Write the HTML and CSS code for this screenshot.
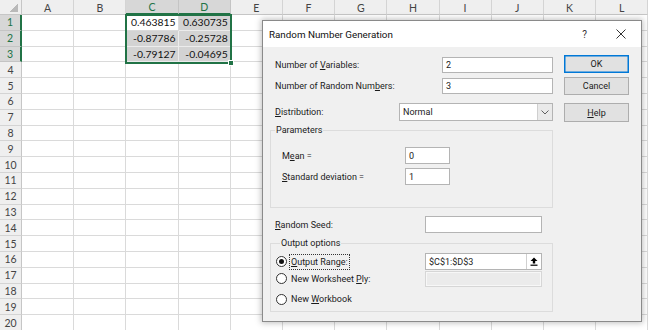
FILE: index.html
```html
<!DOCTYPE html>
<html>
<head>
<meta charset="utf-8">
<link rel="stylesheet" href="styles.css">
</head>
<body>
<div class="sheet">
  <div class="corner"></div><div class="ch">A</div><div class="ch">B</div><div class="ch sel">C</div><div class="ch sel">D</div><div class="ch">E</div><div class="ch">F</div><div class="ch">G</div><div class="ch">H</div><div class="ch">I</div><div class="ch">J</div><div class="ch">K</div><div class="ch">L</div>
  <div class="rh sel">1</div><div class="c"></div><div class="c"></div><div class="c act">0.463815</div><div class="c s">0.630735</div><div class="c"></div><div class="c"></div><div class="c"></div><div class="c"></div><div class="c"></div><div class="c"></div><div class="c"></div><div class="c"></div>
  <div class="rh sel">2</div><div class="c"></div><div class="c"></div><div class="c s">-0.87786</div><div class="c s">-0.25728</div><div class="c"></div><div class="c"></div><div class="c"></div><div class="c"></div><div class="c"></div><div class="c"></div><div class="c"></div><div class="c"></div>
  <div class="rh sel">3</div><div class="c"></div><div class="c"></div><div class="c s">-0.79127</div><div class="c s">-0.04695</div><div class="c"></div><div class="c"></div><div class="c"></div><div class="c"></div><div class="c"></div><div class="c"></div><div class="c"></div><div class="c"></div>
  <div class="rh">4</div><div class="c"></div><div class="c"></div><div class="c"></div><div class="c"></div><div class="c"></div><div class="c"></div><div class="c"></div><div class="c"></div><div class="c"></div><div class="c"></div><div class="c"></div><div class="c"></div>
  <div class="rh">5</div><div class="c"></div><div class="c"></div><div class="c"></div><div class="c"></div><div class="c"></div><div class="c"></div><div class="c"></div><div class="c"></div><div class="c"></div><div class="c"></div><div class="c"></div><div class="c"></div>
  <div class="rh">6</div><div class="c"></div><div class="c"></div><div class="c"></div><div class="c"></div><div class="c"></div><div class="c"></div><div class="c"></div><div class="c"></div><div class="c"></div><div class="c"></div><div class="c"></div><div class="c"></div>
  <div class="rh">7</div><div class="c"></div><div class="c"></div><div class="c"></div><div class="c"></div><div class="c"></div><div class="c"></div><div class="c"></div><div class="c"></div><div class="c"></div><div class="c"></div><div class="c"></div><div class="c"></div>
  <div class="rh">8</div><div class="c"></div><div class="c"></div><div class="c"></div><div class="c"></div><div class="c"></div><div class="c"></div><div class="c"></div><div class="c"></div><div class="c"></div><div class="c"></div><div class="c"></div><div class="c"></div>
  <div class="rh">9</div><div class="c"></div><div class="c"></div><div class="c"></div><div class="c"></div><div class="c"></div><div class="c"></div><div class="c"></div><div class="c"></div><div class="c"></div><div class="c"></div><div class="c"></div><div class="c"></div>
  <div class="rh">10</div><div class="c"></div><div class="c"></div><div class="c"></div><div class="c"></div><div class="c"></div><div class="c"></div><div class="c"></div><div class="c"></div><div class="c"></div><div class="c"></div><div class="c"></div><div class="c"></div>
  <div class="rh">11</div><div class="c"></div><div class="c"></div><div class="c"></div><div class="c"></div><div class="c"></div><div class="c"></div><div class="c"></div><div class="c"></div><div class="c"></div><div class="c"></div><div class="c"></div><div class="c"></div>
  <div class="rh">12</div><div class="c"></div><div class="c"></div><div class="c"></div><div class="c"></div><div class="c"></div><div class="c"></div><div class="c"></div><div class="c"></div><div class="c"></div><div class="c"></div><div class="c"></div><div class="c"></div>
  <div class="rh">13</div><div class="c"></div><div class="c"></div><div class="c"></div><div class="c"></div><div class="c"></div><div class="c"></div><div class="c"></div><div class="c"></div><div class="c"></div><div class="c"></div><div class="c"></div><div class="c"></div>
  <div class="rh">14</div><div class="c"></div><div class="c"></div><div class="c"></div><div class="c"></div><div class="c"></div><div class="c"></div><div class="c"></div><div class="c"></div><div class="c"></div><div class="c"></div><div class="c"></div><div class="c"></div>
  <div class="rh">15</div><div class="c"></div><div class="c"></div><div class="c"></div><div class="c"></div><div class="c"></div><div class="c"></div><div class="c"></div><div class="c"></div><div class="c"></div><div class="c"></div><div class="c"></div><div class="c"></div>
  <div class="rh">16</div><div class="c"></div><div class="c"></div><div class="c"></div><div class="c"></div><div class="c"></div><div class="c"></div><div class="c"></div><div class="c"></div><div class="c"></div><div class="c"></div><div class="c"></div><div class="c"></div>
  <div class="rh">17</div><div class="c"></div><div class="c"></div><div class="c"></div><div class="c"></div><div class="c"></div><div class="c"></div><div class="c"></div><div class="c"></div><div class="c"></div><div class="c"></div><div class="c"></div><div class="c"></div>
  <div class="rh">18</div><div class="c"></div><div class="c"></div><div class="c"></div><div class="c"></div><div class="c"></div><div class="c"></div><div class="c"></div><div class="c"></div><div class="c"></div><div class="c"></div><div class="c"></div><div class="c"></div>
  <div class="rh">19</div><div class="c"></div><div class="c"></div><div class="c"></div><div class="c"></div><div class="c"></div><div class="c"></div><div class="c"></div><div class="c"></div><div class="c"></div><div class="c"></div><div class="c"></div><div class="c"></div>
  <div class="rh">20</div><div class="c"></div><div class="c"></div><div class="c"></div><div class="c"></div><div class="c"></div><div class="c"></div><div class="c"></div><div class="c"></div><div class="c"></div><div class="c"></div><div class="c"></div><div class="c"></div>
</div>
<div class="selbox"><span class="handle"></span></div>

<div class="dlg">
  <div class="titlebar">
    <span class="title">Random Number Generation</span>
    <span class="qmark">?</span>
    <svg class="xbtn" width="10" height="10" viewBox="0 0 10 10"><path d="M0.5 0.5 L9.5 9.5 M9.5 0.5 L0.5 9.5" stroke="#333" stroke-width="1" fill="none"/></svg>
  </div>
  <div class="body">
    <div class="main">
      <div class="row r1"><span class="lbl">Number of <u>V</u>ariables:</span><span class="inp wide">2</span></div>
      <div class="row r2"><span class="lbl">Number of Random Num<u>b</u>ers:</span><span class="inp wide">3</span></div>
      <div class="row r3"><span class="lbl"><u>D</u>istribution:</span>
        <span class="select"><span class="val">Normal</span><span class="arrow"><svg width="8" height="5" viewBox="0 0 8 5"><path d="M0.5 0.5 L4 4 L7.5 0.5" stroke="#606060" stroke-width="1" fill="none"/></svg></span></span>
      </div>
      <fieldset class="grp params">
        <legend>Parameters</legend>
        <div class="prow first"><span class="lbl">M<u>e</u>an =</span><span class="inp small">0</span></div>
        <div class="prow"><span class="lbl"><u>S</u>tandard deviation =</span><span class="inp small">1</span></div>
      </fieldset>
      <div class="seed"><span class="lbl"><u>R</u>andom Seed:</span><span class="inp mid"></span></div>
      <fieldset class="grp output">
        <legend>Output options</legend>
        <div class="orow first"><span class="radio on"></span><span class="rlbl focus"><u>O</u>utput Range:</span>
          <span class="inp mid range"><span class="rv">$C$1:$D$3</span><span class="pick"><svg width="8" height="9" viewBox="0 0 8 9"><path d="M4 0.5 L7.5 4 L5.2 4 L5.2 6.5 L2.8 6.5 L2.8 4 L0.5 4 Z" fill="#000"/><rect x="0.5" y="7.6" width="7" height="1.2" fill="#000"/></svg></span></span>
        </div>
        <div class="orow"><span class="radio"></span><span class="rlbl">New Worksheet <u>P</u>ly:</span><span class="inp mid dis"></span></div>
        <div class="orow last"><span class="radio"></span><span class="rlbl">New <u>W</u>orkbook</span></div>
      </fieldset>
    </div>
    <div class="btns">
      <span class="btn def">OK</span>
      <span class="btn">Cancel</span>
      <span class="btn hb"><u>H</u>elp</span>
    </div>
  </div>
</div>
</body>
</html>
```

FILE: styles.css
```css
* { box-sizing: border-box; }
html, body { margin: 0; padding: 0; }
body {
  width: 650px;
  height: 330px;
  overflow: hidden;
  position: relative;
  background: #fff;
  font-family: Lato, "Noto Sans", sans-serif;
}

/* ---------- worksheet ---------- */
.sheet {
  display: grid;
  grid-template-columns: 22px repeat(12, 52.2px);
  grid-template-rows: 15px repeat(20, 15.8px);
}
.sheet > div {
  border-right: 1px solid #dadada;
  border-bottom: 1px solid #dadada;
}
.corner {
  background: #efefef linear-gradient(to bottom right, transparent 50%, #b9b9b9 50%) no-repeat right 3px bottom 2px / 9px 9px;
  border-bottom-color: #c6c6c6 !important;
  border-right-color: #c6c6c6 !important;
}
.ch {
  background: #efefef;
  border-right-color: #d4d4d4 !important;
  border-bottom-color: #c6c6c6 !important;
  color: #444;
  font-size: 10.5px;
  display: flex;
  align-items: center;
  justify-content: center;
  padding-top: 1px;
}
.ch.sel {
  background: #d7d7d7;
  color: #217346;
  border-bottom: 2px solid #217346 !important;
  border-right-color: #c4c4c4 !important;
}
.rh {
  background: #efefef;
  border-right-color: #c6c6c6 !important;
  border-bottom-color: #d4d4d4 !important;
  color: #444;
  font-size: 10.5px;
  display: flex;
  align-items: center;
  justify-content: center;
}
.rh.sel {
  background: #d7d7d7;
  color: #217346;
  border-right: 2px solid #217346 !important;
  border-bottom-color: #c4c4c4 !important;
}
.c {
  font-size: 10.4px;
  color: #111;
  text-align: right;
  padding-right: 2px;
  line-height: 15px;
}
.c.s {
  background: #d3d3d3;
  border-color: #ececec;
}
.c.act { background: #fff; }

.selbox {
  position: absolute;
  left: 125px;
  top: 14px;
  width: 107px;
  height: 50px;
  border: 2px solid #217346;
}
.handle {
  position: absolute;
  right: -4px;
  bottom: -4px;
  width: 6px;
  height: 6px;
  background: #217346;
  border: 1px solid #fff;
}

/* ---------- dialog ---------- */
.dlg {
  position: absolute;
  left: 262px;
  top: 20px;
  width: 380px;
  height: 302px;
  border: 1px solid #8a8a8a;
  background: #f0f0f0;
  box-shadow: 0 0 6px 1px rgba(0, 0, 0, 0.25);
  font-family: Roboto, "Noto Sans", sans-serif;
  font-size: 9px;
  color: #1b1b1b;
}
.titlebar {
  height: 26px;
  background: #fff;
  display: flex;
  align-items: center;
  padding-left: 6px;
}
.title { font-size: 9.8px; flex: 1; color: #111; }
.qmark { font-size: 10px; color: #333; margin-right: 29px; }
.xbtn { margin-right: 15px; }

.body {
  display: flex;
  padding-left: 7px;
}
.main { width: 283px; }
.btns {
  margin-left: 11px;
  width: 65px;
  padding-top: 8px;
  display: flex;
  flex-direction: column;
}
.btn {
  height: 18px;
  background: #e1e1e1;
  border: 1px solid #adadad;
  display: flex;
  align-items: center;
  justify-content: center;
  font-size: 9px;
  margin-bottom: 4px;
}
.btn.def { border-color: #0078d7; box-shadow: inset 0 0 0 0.5px #0078d7; }
.btn.hb { height: 19px; margin-top: 4px; }

.row {
  display: flex;
  align-items: center;
  justify-content: space-between;
}
.lbl { padding-left: 5px; white-space: nowrap; }
.r1 { margin-top: 10px; height: 16px; }
.r2 { margin-top: 5px; height: 16px; }
.r3 { margin-top: 9px; height: 18px; }

.inp {
  display: flex;
  align-items: center;
  background: #fff;
  border: 1px solid #b4b4b4;
  padding-left: 3px;
  height: 16px;
}
.inp.wide { width: 111px; }
.inp.small { width: 45px; height: 17px; }
.inp.mid { width: 117px; height: 17px; }

.select {
  display: flex;
  width: 154px;
  height: 18px;
  background: #fff;
  border: 1px solid #b4b4b4;
}
.select .val { flex: 1; padding-left: 3px; display: flex; align-items: center; }
.select .arrow {
  width: 15px;
  border-left: 1px solid #cfcfcf;
  background: #eaeaea;
  display: flex;
  align-items: center;
  justify-content: center;
}

.grp {
  margin: 0;
  padding: 0;
  border: 1px solid #dcdcdc;
  min-inline-size: 0;
}
.grp legend {
  padding: 0 1px;
  margin-left: 4px;
  line-height: 12px;
  font-size: 9px;
}
.params { margin-top: 3px; height: 84px; padding-top: 11px; }
.prow { display: grid; grid-template-columns: 134px 45px; align-items: center; height: 17px; margin-bottom: 4px; }
.prow .lbl { padding-left: 11px; }

.seed {
  display: grid;
  grid-template-columns: 155px 117px;
  align-items: center;
  margin-top: 8px;
  height: 17px;
}

.output { margin-top: 4px; height: 75px; padding-top: 4px; padding-left: 5px; }
.orow { display: flex; align-items: center; height: 17px; }
.orow.last { margin-top: 3px; height: 18px; }
.radio {
  width: 11px;
  height: 11px;
  border-radius: 50%;
  border: 1px solid #333;
  background: #fff;
  position: relative;
  flex: none;
}
.radio.on::after {
  content: "";
  position: absolute;
  left: 2px;
  top: 2px;
  width: 5px;
  height: 5px;
  border-radius: 50%;
  background: #111;
}
.rlbl { margin-left: 2px; padding: 0 1px; border: 1px solid transparent; line-height: 14px; white-space: nowrap; }
.rlbl.focus { border: 1px dotted #333; }
.orow .inp { margin-left: auto; margin-right: 10px; }
.range { padding-right: 0; }
.range .rv { flex: 1; }
.pick {
  width: 15px;
  height: 15px;
  border-left: 1px solid #d0d0d0;
  display: flex;
  align-items: center;
  justify-content: center;
}
.inp.dis { background: #ebebeb; border-color: #d6d6d6; box-shadow: inset 0 0 0 1px #f7f7f7; height: 16px; }
```
